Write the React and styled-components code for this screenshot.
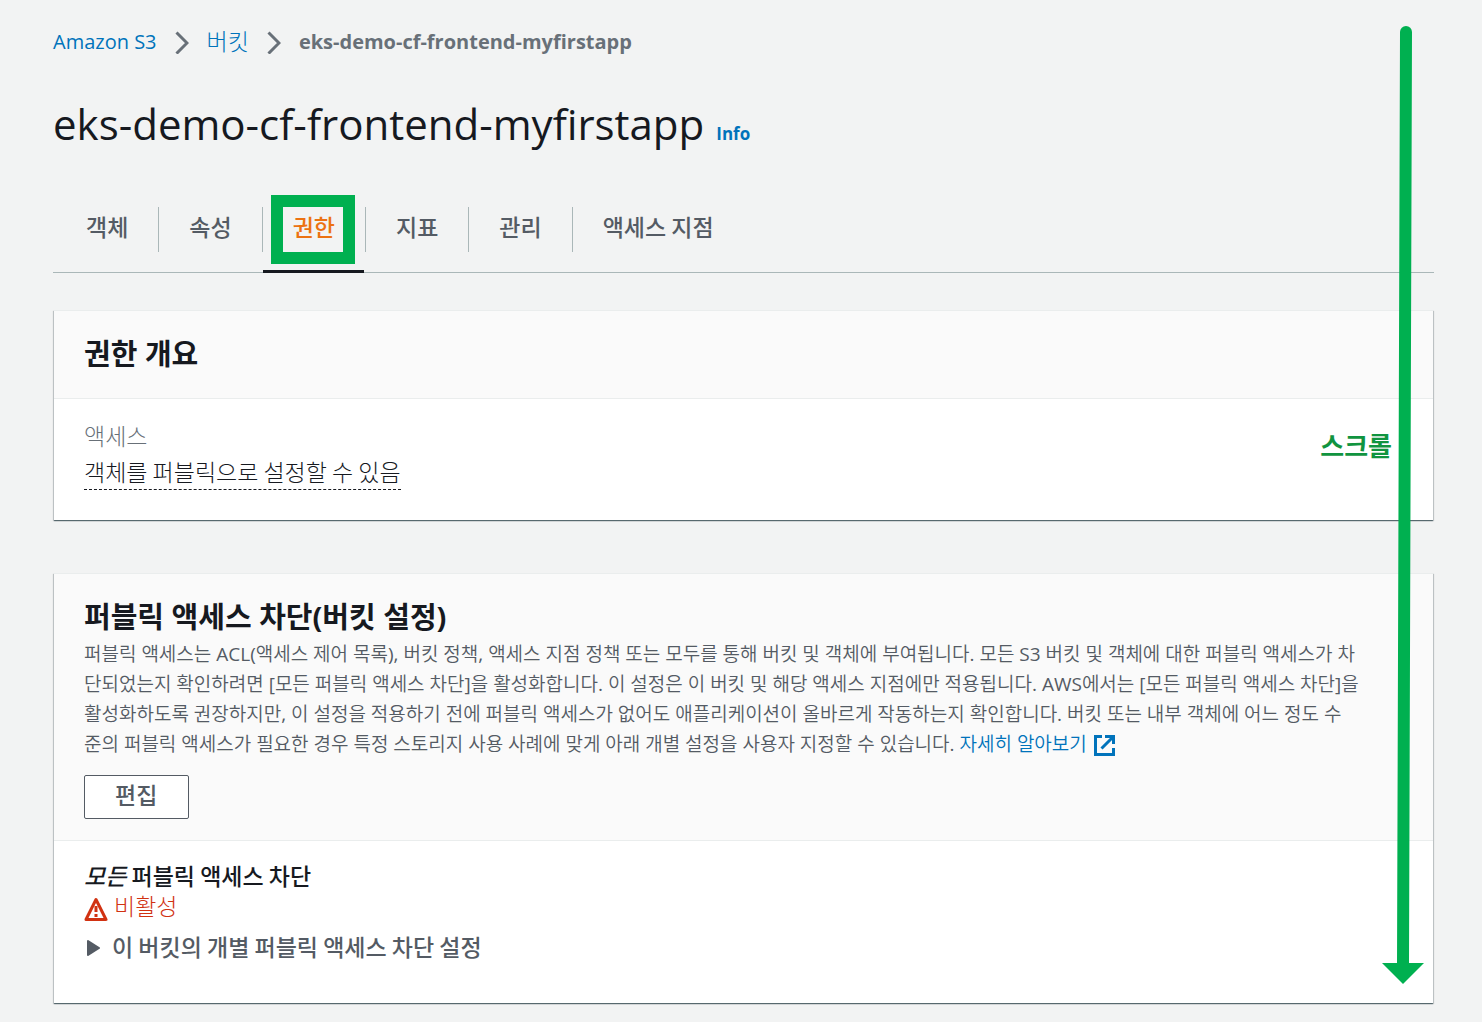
import React from "react";
import styled, { createGlobalStyle } from "styled-components";

const latinFont = `"Open Sans", "Noto Sans CJK KR", sans-serif`;
const koreanFont = `"Noto Sans CJK KR", "Open Sans", sans-serif`;

const GlobalStyle = createGlobalStyle`
  *, *::before, *::after { box-sizing: border-box; }
  body {
    margin: 0;
    background: #f2f3f3;
    color: #16191f;
    font-family: ${koreanFont};
    font-size: 23px;
    font-weight: 300;
  }
  button { font-family: inherit; cursor: pointer; }
`;

const Page = styled.main`
  position: relative;
  min-height: 100vh;
  padding: 25px 48px 18px 53px;
`;

const Breadcrumbs = styled.ol`
  display: flex;
  align-items: center;
  gap: 18px;
  margin: 0;
  padding: 0;
  list-style: none;
  font-family: ${latinFont};
  font-size: 20px;
  font-weight: 400;
  line-height: 32px;
`;

const Crumb = styled.li`
  display: flex;
  align-items: center;
  gap: 18px;
  color: #687078;
  font-weight: ${(p) => (p.$current ? 700 : 400)};
`;

const Link = styled.a`
  color: #0073bb;
  text-decoration: none;
`;

const Korean = styled.span`
  font-size: 23px;
  font-weight: 300;
`;

const TitleRow = styled.div`
  display: flex;
  align-items: baseline;
  gap: 12px;
  margin-top: 35px;
  font-family: ${latinFont};
`;

const Title = styled.h1`
  margin: 0;
  font-size: 42px;
  font-weight: 400;
  line-height: 60px;
`;

const InfoLink = styled(Link)`
  font-size: 17px;
  font-weight: 700;
`;

const Tabs = styled.div`
  display: flex;
  margin-top: 36px;
  padding-left: 3px;
  border-bottom: 1px solid #aab7b8;
`;

const Tab = styled.button`
  position: relative;
  height: 82px;
  padding: 0 31px 10px 30px;
  border: 0;
  background: none;
  color: ${(p) => (p.$active ? "#ec7211" : "#545b64")};
  font-size: 23px;
  font-weight: 500;
  line-height: 34px;

  &:not(:last-child)::before {
    content: "";
    position: absolute;
    top: 17px;
    right: 0;
    width: 1px;
    height: 45px;
    background: #aab7b8;
  }

  &::after {
    content: "";
    display: ${(p) => (p.$active ? "block" : "none")};
    position: absolute;
    left: 0;
    right: 2px;
    bottom: -1px;
    height: 3px;
    background: #16191f;
  }
`;

const Highlight = styled.span`
  position: absolute;
  top: 5px;
  left: 8px;
  right: 11px;
  height: 69px;
  border: 12px solid #00b050;
`;

const Card = styled.section`
  margin: ${(p) => (p.$first ? 37 : 53)}px 1px 0;
  background: #fff;
  box-shadow: 0 1px 1px 0 rgba(0, 28, 36, 0.5), 1px 1px 1px 0 rgba(0, 28, 36, 0.15),
    -1px 1px 1px 0 rgba(0, 28, 36, 0.15);
  border-top: 1px solid #eaeded;
`;

const CardHeader = styled.header`
  padding: 21px 30px;
  background: #fafafa;
  border-bottom: 1px solid #eaeded;
`;

const CardTitle = styled.h2`
  margin: 0 0 1px;
  font-family: ${latinFont};
  font-size: 29px;
  font-weight: 700;
  line-height: 44px;
`;

const Description = styled.p`
  margin: -1px 0 16px;
  padding-right: 40px;
  color: #545b64;
  font-family: "Open Sans", "Noto Sans CJK KR DemiLight", "Noto Sans CJK KR", sans-serif;
  font-size: 19px;
  font-weight: 400;
  line-height: 30px;
`;

const ExternalIcon = styled.svg`
  width: 24px;
  height: 24px;
  margin-left: 5px;
  vertical-align: -6px;
`;

const EditButton = styled.button`
  display: block;
  height: 44px;
  padding: 0 31px 6px 30px;
  border: 1px solid #545b64;
  border-radius: 2px;
  background: #fff;
  color: #545b64;
  font-size: 23px;
  font-weight: 500;
  line-height: 36px;
`;

const CardBody = styled.div`
  display: flex;
  flex-direction: column;
  align-items: flex-start;
  padding: 18px 30px 30px;
`;

const Label = styled.div`
  margin-bottom: 1px;
  color: #687078;
  line-height: 36px;
`;

const Popover = styled.button`
  padding: 0;
  border: 0;
  border-bottom: 1px dashed #16191f;
  background: none;
  color: #16191f;
  font-size: 23px;
  font-weight: 300;
  line-height: 35px;
`;

const SettingName = styled.div`
  font-weight: 500;
  line-height: 32px;
`;

const Status = styled.div`
  display: flex;
  align-items: flex-start;
  gap: 6px;
  color: #d13212;
  line-height: 28px;

  svg { margin-top: 6px; }
`;

const Expander = styled.button`
  display: flex;
  align-items: center;
  gap: 12px;
  margin: 7px 0 9px;
  padding: 0 0 0 3px;
  border: 0;
  background: none;
  color: #545b64;
  font-size: 23px;
  font-weight: 500;
  line-height: 36px;

  svg { margin-top: 4px; }
`;

const ScrollArrow = styled.svg`
  position: absolute;
  top: 26px;
  right: 57px;
  width: 44px;
  height: 958px;
  pointer-events: none;
`;

const ScrollNote = styled.span`
  position: absolute;
  top: 426px;
  right: 90px;
  color: #10943f;
  font-size: 26px;
  font-weight: 700;
  line-height: 38px;
`;

const Chevron = () => (
  <svg width="14" height="24" viewBox="0 0 14 24" fill="none" stroke="#687078" strokeWidth="3" aria-hidden="true">
    <path d="M1.5 2.5 12 13 1.5 23.5" />
  </svg>
);

const tabs = ["객체", "속성", "권한", "지표", "관리", "액세스 지점"];

export default function App() {
  return (
    <>
      <GlobalStyle />
      <Page>
        <nav aria-label="breadcrumb">
          <Breadcrumbs>
            <Crumb><Link href="#s3">Amazon S3</Link><Chevron /></Crumb>
            <Crumb><Link href="#buckets"><Korean>버킷</Korean></Link><Chevron /></Crumb>
            <Crumb $current aria-current="page">eks-demo-cf-frontend-myfirstapp</Crumb>
          </Breadcrumbs>
        </nav>

        <TitleRow>
          <Title>eks-demo-cf-frontend-myfirstapp</Title>
          <InfoLink href="#info">Info</InfoLink>
        </TitleRow>

        <Tabs role="tablist">
          {tabs.map((name) => (
            <Tab key={name} role="tab" aria-selected={name === "권한"} $active={name === "권한"}>
              {name}
              {name === "권한" && <Highlight />}
            </Tab>
          ))}
        </Tabs>

        <Card $first>
          <CardHeader>
            <CardTitle>권한 개요</CardTitle>
          </CardHeader>
          <CardBody>
            <Label>액세스</Label>
            <Popover>객체를 퍼블릭으로 설정할 수 있음</Popover>
          </CardBody>
        </Card>

        <Card>
          <CardHeader>
            <CardTitle>퍼블릭 액세스 차단(버킷 설정)</CardTitle>
            <Description>
              퍼블릭 액세스는 ACL(액세스 제어 목록), 버킷 정책, 액세스 지점 정책 또는 모두를 통해 버킷 및 객체에
              부여됩니다. 모든 S3 버킷 및 객체에 대한 퍼블릭 액세스가 차단되었는지 확인하려면 [모든 퍼블릭 액세스
              차단]을 활성화합니다. 이 설정은 이 버킷 및 해당 액세스 지점에만 적용됩니다. AWS에서는 [모든 퍼블릭
              액세스 차단]을 활성화하도록 권장하지만, 이 설정을 적용하기 전에 퍼블릭 액세스가 없어도
              애플리케이션이 올바르게 작동하는지 확인합니다. 버킷 또는 내부 객체에 어느 정도 수<br />준의 퍼블릭
              액세스가 필요한 경우 특정 스토리지 사용 사례에 맞게 아래 개별 설정을 사용자 지정할 수 있습니다.{" "}
              <Link href="#more">
                자세히 알아보기
                <ExternalIcon viewBox="0 0 24 24" fill="none" stroke="#0073bb" strokeWidth="3" aria-hidden="true">
                  <path d="M10 3.5H3.5V21.5H21.5V15M13 3.5H21.5V11M21 4 9.5 15.5" />
                </ExternalIcon>
              </Link>
            </Description>
            <EditButton>편집</EditButton>
          </CardHeader>
          <CardBody>
            <SettingName><em>모든</em> 퍼블릭 액세스 차단</SettingName>
            <Status>
              <svg width="24" height="24" viewBox="0 0 24 24" aria-hidden="true">
                <path d="M12 2.5 22 22.5H2Z" fill="none" stroke="#d13212" strokeWidth="3" strokeLinejoin="round" />
                <path d="M12 9v6M12 17v3" fill="none" stroke="#d13212" strokeWidth="3" />
              </svg>
              비활성
            </Status>
            <Expander aria-expanded="false">
              <svg width="13" height="16" viewBox="0 0 13 16" aria-hidden="true">
                <path d="M1 1 12 8 1 15Z" fill="#545b64" stroke="#545b64" strokeWidth="2" strokeLinejoin="round" />
              </svg>
              이 버킷의 개별 퍼블릭 액세스 차단 설정
            </Expander>
          </CardBody>
        </Card>

        <ScrollNote>스크롤</ScrollNote>
        <ScrollArrow viewBox="0 0 44 958" aria-hidden="true">
          <path d="M25 6 22 940" stroke="#00b050" strokeWidth="12" strokeLinecap="round" />
          <path d="M1 937H43L22 958Z" fill="#00b050" />
        </ScrollArrow>
      </Page>
    </>
  );
}
